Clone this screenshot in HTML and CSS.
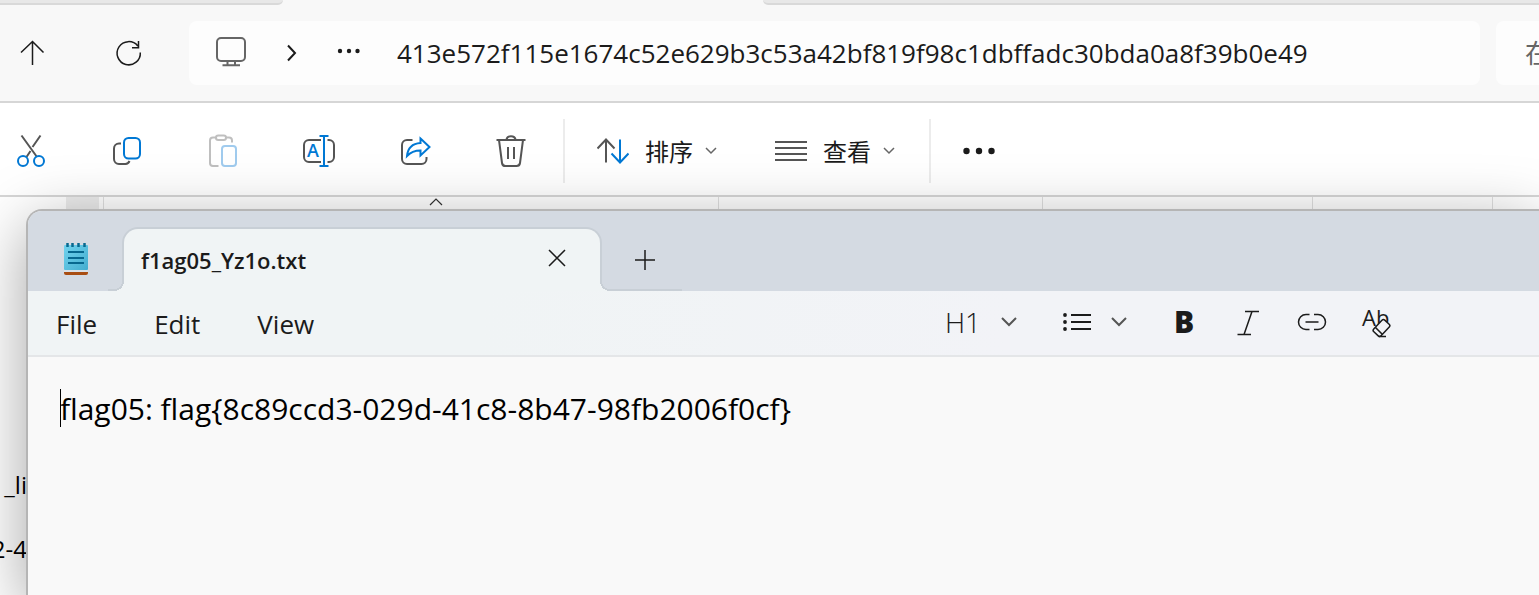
FILE: index.html
```html
<!DOCTYPE html>
<html lang="zh-CN">
<head>
<meta charset="utf-8">
<title>f1ag05_Yz1o.txt</title>
<link rel="stylesheet" href="styles.css">
</head>
<body>
<main class="desktop">
  <section class="explorer" aria-label="Explorer">
    <div class="strip"><div class="strip-left"></div><div class="strip-active"></div><div class="strip-right"></div></div>
    <nav class="nav">
      <button class="nav-button" aria-label="Up"><svg class="icon" viewBox="12 33 40 40"><path class="thin" d="M32.500 41.500V65M21 52.500l11.500-11 11 11"/></svg></button>
      <button class="nav-button" aria-label="Refresh"><svg class="icon" viewBox="108 33 40 40"><path class="thin" d="M140.300 52.500a11.600 11.600 0 1 1-2.500-6.500M138.500 41v6.700H132"/></svg></button>
      <div class="address">
        <svg class="icon" viewBox="211 33 40 40"><g class="monitor"><rect x="217" y="38" width="28" height="23" rx="4"/><path d="M227.500 61v4M235 61v4M222.500 65.300h17.500"/></g></svg>
        <svg class="crumb" viewBox="0 0 12 20"><path class="mid" d="M2 2.500l7 7.500-7 7.500"/></svg>
        <svg class="dots" viewBox="0 0 24 20"><circle cx="3" cy="8" r="2.200"/><circle cx="12" cy="8" r="2.200"/><circle cx="20.500" cy="8" r="2.200"/></svg>
        <input class="path" aria-label="Path" value="413e572f115e1674c52e629b3c53a42bf819f98c1dbffadc30bda0a8f39b0e49">
      </div>
      <input class="search" aria-label="Search" placeholder="在">
    </nav>
    <div class="commands">
      <div class="actions">
        <button class="action" aria-label="Cut"><svg class="icon" viewBox="12 131 40 40"><path class="gray" d="M21.500 135.500l15.500 21.500M40.500 135.500l-8 11.500M30.500 151l-4 6"/><g class="blue"><circle cx="23" cy="161" r="5"/><circle cx="39" cy="161" r="5"/></g></svg></button>
        <button class="action" aria-label="Copy"><svg class="icon" viewBox="108 131 40 40"><path class="gray" d="M121 143.500h-2a5 5 0 0 0-5 5V159a5 5 0 0 0 5 5h6.500a5 5 0 0 0 4-3"/><rect class="blue" x="124" y="138" width="16" height="20.500" rx="4.500"/></svg></button>
        <button class="action" aria-label="Paste" disabled><svg class="icon" viewBox="204 131 40 40"><path class="pale" d="M218.500 166H213a3 3 0 0 1-3-3v-22.500a3 3 0 0 1 3-3h3M226 137.500h3a3 3 0 0 1 3 3v2"/><rect class="pale" x="216" y="135.500" width="10" height="4.500" rx="2.200"/><rect class="paleblue" x="222" y="146" width="14" height="20" rx="3"/></svg></button>
        <button class="action" aria-label="Rename"><svg class="icon" viewBox="300 131 40 40"><path class="gray" d="M321 140h-12a5 5 0 0 0-5 5v12a5 5 0 0 0 5 5h12M327.500 140h1.500a5 5 0 0 1 5 5v12a5 5 0 0 1-5 5h-1.500"/><path class="blue" d="M319.500 136h9M324 136v30M319.500 166h9"/><text class="rename-letter" x="307" y="157">A</text></svg></button>
        <button class="action" aria-label="Share"><svg class="icon" viewBox="396 131 40 40"><path class="gray" d="M412.500 140H407a5 5 0 0 0-5 5v14a5 5 0 0 0 5 5h14.500a5 5 0 0 0 5-5v-2"/><path class="blue" d="M420.500 138.500l9 8.500-9 8.500v-5c-6 0-9.500 1.200-13.500 5.500.8-8 5.500-12.500 13.500-13z"/></svg></button>
        <button class="action" aria-label="Delete"><svg class="icon" viewBox="492 131 40 40"><path class="gray" d="M496.500 140h29M506.500 139.500c.8-4.500 8.200-4.500 9 0M499 140l3 23a3.500 3.500 0 0 0 3.500 3h11a3.500 3.500 0 0 0 3.500-3l3-23M508 147v12M514 147v12"/></svg></button>
      </div>
      <span class="separator"></span>
      <button class="menu-command sort"><svg class="icon32" viewBox="597 135 32 32"><path class="gray" d="M606 162.500V139.500M597.500 148.500l8.500-9 8.500 9"/><path class="blue" d="M620 139.500v23M611.500 153.500l8.500 9 8.500-9"/></svg><span>排序</span><svg class="mini" viewBox="0 0 12 12"><path d="M1 3l5 5 5-5"/></svg></button>
      <button class="menu-command view"><svg class="icon32" viewBox="775 135 32 32"><path class="gray" d="M775 142h32M775 148h32M775 154h32M775 160h32"/></svg><span>查看</span><svg class="mini" viewBox="0 0 12 12"><path d="M1 3l5 5 5-5"/></svg></button>
      <span class="separator second"></span>
      <button class="more" aria-label="More"><svg class="icon32" viewBox="0 0 32 32"><circle cx="3.500" cy="16" r="3.200"/><circle cx="16" cy="16" r="3.200"/><circle cx="28.500" cy="16" r="3.200"/></svg></button>
    </div>
    <div class="listing">
      <div class="columns">
        <span class="column select"></span><span class="column gutter"></span><span class="column name"><svg class="caret-up" viewBox="0 0 14 9"><path d="M1 8l6-6 6 6"/></svg></span><span class="column date"></span><span class="column type"></span><span class="column size"></span><span class="column last"></span>
      </div>
      <div class="files"><span>_li</span><span>2-4</span></div>
    </div>
  </section>

  <section class="notepad" aria-label="Notepad">
    <header class="titlebar">
      <svg class="app" viewBox="0 0 24 34"><defs><linearGradient id="page" x2="1" y2="1"><stop stop-color="#72d3ee"/><stop offset="1" stop-color="#43adcf"/></linearGradient></defs><path fill="#a84d12" d="M0 30h24v1q0 2-2 2H2q-2 0-2-2z"/><path fill="#d9e0e6" d="M0 27h24v3H0z"/><rect y="3" width="24" height="25" rx="1" fill="url(#page)"/><path stroke="#07688f" stroke-width="2.500" d="M3.500 1v4M8.500 1v4M14.500 1v4M20.500 1v4"/><path stroke="#07688f" stroke-width="2" d="M4 10h16M4 16h16M4 21h16"/></svg>
      <div class="tab"><span>f1ag05_Yz1o.txt</span><button class="close" aria-label="Close tab"><svg viewBox="0 0 18 18"><path d="M1 1l16 16M17 1L1 17"/></svg></button></div>
      <button class="new-tab" aria-label="New tab"><svg viewBox="0 0 20 20"><path d="M10 0v20M0 10h20"/></svg></button>
    </header>
    <div class="menubar">
      <div class="menus"><button>File</button><button>Edit</button><button>View</button></div>
      <div class="format">
        <button class="heading">H1<svg class="chevron" viewBox="0 0 16 10"><path d="M1 1l7 7 7-7"/></svg></button>
        <button class="list" aria-label="List"><svg class="bullets" viewBox="0 0 28 18"><path d="M8 2h20M8 9h20M8 16h20"/><circle cx="2" cy="2" r="1.900"/><circle cx="2" cy="9" r="1.900"/><circle cx="2" cy="16" r="1.900"/></svg><svg class="chevron" viewBox="0 0 16 10"><path d="M1 1l7 7 7-7"/></svg></button>
        <button class="bold">B</button>
        <button aria-label="Italic"><svg class="icon32" viewBox="1232 306 32 32"><path class="thin" d="M1245 311.500h14M1237.500 334.500h13.500M1252 311.500l-8 23"/></svg></button>
        <button aria-label="Link"><svg class="icon32" viewBox="1296 306 32 32"><path class="thin" d="M1309.500 314.500h-3.500a7.500 7.500 0 0 0 0 15h3.500M1314 314.500h4a7.500 7.500 0 0 1 0 15h-4M1305.500 322h13"/></svg></button>
        <button aria-label="Clear formatting"><svg class="icon32" viewBox="1360 306 32 32"><text class="clear-letters" x="1362" y="326">Ab</text><rect class="eraser" x="-5" y="-8" width="10" height="16" rx="2" transform="translate(1381.500 328) rotate(43)"/><path class="thin" d="M1375.500 327.500l7 7M1379 336.500h7"/></svg></button>
      </div>
    </div>
    <div class="editor"><span class="text-caret"></span><textarea aria-label="Text editor" spellcheck="false">flag05: flag{8c89ccd3-029d-41c8-8b47-98fb2006f0cf}</textarea></div>
  </section>
</main>
</body>
</html>
```

FILE: styles.css
```css
* { box-sizing: border-box; }
body {
  margin: 0;
  color: #1b1b1b;
  font-family: "Open Sans", "Noto Sans CJK SC", sans-serif;
}
button, input, textarea {
  margin: 0;
  padding: 0;
  border: 0;
  background: none;
  color: inherit;
  font: inherit;
  outline: 0;
}
svg { display: block; flex: none; fill: none; }
.desktop { position: relative; height: 100vh; overflow: hidden; }
.icon { width: 40px; height: 40px; }
.icon32 { width: 32px; height: 32px; }
.thin { stroke: #1b1b1b; stroke-width: 1.5; }
.mid { stroke: #1b1b1b; stroke-width: 2; }
.gray { stroke: #555; stroke-width: 2; }
.blue { stroke: #0078d4; stroke-width: 2; }
.pale { stroke: #bfbfbf; stroke-width: 2; }
.paleblue { stroke: #a0cbee; stroke-width: 2; }

/* Explorer */
.explorer { display: flex; flex-direction: column; height: 100%; background: #fff; }
.strip { display: flex; flex: none; height: 5px; background: #f8f8f8; }
.strip-left { width: 283px; background: #e8e8e8; border-bottom: 2px solid #d9d9d9; border-bottom-right-radius: 5px; }
.strip-active { width: 480px; }
.strip-right { flex: 1; background: #e8e8e8; border-bottom: 2px solid #d9d9d9; border-bottom-left-radius: 5px; }
.nav {
  display: flex;
  flex: none;
  align-items: center;
  height: 98px;
  background: #f8f8f8;
  border-bottom: 2px solid #d6d6d6;
}
.nav-button { display: flex; justify-content: center; width: 64px; margin-right: 32px; }
.nav-button + .nav-button { margin-right: 29px; }
.address {
  display: flex;
  flex: 1;
  align-items: center;
  height: 64px;
  padding-left: 22px;
  background: #fdfdfd;
  border-radius: 8px;
}
.monitor { stroke: #666; stroke-width: 2; }
.crumb { width: 12px; height: 20px; margin-left: 35px; }
.dots { width: 24px; height: 20px; margin: 0 36px 0 39px; fill: #1b1b1b; }
.path { flex: 1; min-width: 0; height: 40px; font-size: 26px; }
.search {
  width: 43px;
  height: 64px;
  margin-left: 16px;
  padding-left: 29px;
  background: #fdfdfd;
  border-radius: 8px 0 0 8px;
  font-size: 26px;
}
.search::placeholder { color: #666; opacity: 1; }
.commands {
  display: flex;
  flex: none;
  align-items: center;
  height: 94px;
  padding-top: 4px;
  border-bottom: 2px solid #d6d6d6;
}
.actions { display: flex; gap: 32px; }
.action { display: flex; justify-content: center; width: 64px; }
.rename-letter { fill: #0078d4; font-size: 18px; font-weight: 600; }
.separator { width: 2px; height: 64px; margin-left: 19px; background: #ececec; }
.second { margin-left: 34px; }
.menu-command { display: flex; align-items: center; margin-left: 32px; font-size: 24px; line-height: 32px; }
.menu-command span { margin: 0 12px 0 16px; padding-top: 2px; }
.view { margin-left: 58px; }
.mini { width: 12px; height: 12px; stroke: #666; stroke-width: 1.5; }
.more { margin-left: 32px; }
.more svg { fill: #1b1b1b; }
.listing { flex: 1; }
.columns { display: flex; height: 24px; }
.column { border-right: 1px solid #e0e0e0; }
.select { width: 99px; border-right: 0; background: linear-gradient(#ececec, #ececec) right / 33px 100% no-repeat; }
.gutter { width: 5px; }
.name { display: flex; justify-content: center; width: 615px; padding-left: 50px; }
.date { width: 324px; }
.type { width: 270px; }
.size { width: 180px; }
.last { border: 0; }
.caret-up { width: 14px; height: 9px; stroke: #333; stroke-width: 1.2; }
.files {
  display: flex;
  flex-direction: column;
  align-items: flex-end;
  width: 27px;
  padding-top: 232px;
  color: #000;
  font-size: 24px;
  line-height: 64px;
  white-space: nowrap;
}

/* Notepad */
.notepad {
  position: absolute;
  inset: 209px 0 0 26px;
  display: flex;
  flex-direction: column;
  background: #f9f9f9;
  border: solid #b5b5b5;
  border-width: 2px 0 0 2px;
  border-top-left-radius: 16px;
  box-shadow: 0 16px 64px rgba(0, 0, 0, 0.36);
}
.titlebar {
  display: flex;
  flex: none;
  height: 80px;
  padding-left: 36px;
  background: #d4dae2;
  border-top-left-radius: 14px;
}
.app { width: 24px; height: 34px; margin-top: 31px; }
.tab {
  position: relative;
  display: flex;
  justify-content: space-between;
  width: 480px;
  margin: 16px 0 0 34px;
  padding: 0 34px 0 17px;
  background: #f0f4f5;
  border: solid #c8cfd6;
  border-width: 2px 2px 0;
  border-radius: 16px 16px 0 0;
  font-size: 22px;
  font-weight: 600;
  line-height: 62px;
}
.tab::before, .tab::after { content: ""; position: absolute; bottom: 0; height: 10px; }
.tab::before {
  left: -16px;
  width: 16px;
  background:
    radial-gradient(circle at 0 0, #d4dae2 8px, #c8cfd6 8px 10px, #f0f4f5 10px) right / 10px 10px no-repeat,
    linear-gradient(#c8cfd6, #c8cfd6) bottom / 100% 2px no-repeat;
}
.tab::after {
  right: -82px;
  width: 82px;
  background:
    radial-gradient(circle at 100% 0, #d4dae2 8px, #c8cfd6 8px 10px, #f0f4f5 10px) left / 10px 10px no-repeat,
    linear-gradient(#c8cfd6, #c8cfd6) right bottom / 72px 2px no-repeat;
}
.close { align-self: flex-start; margin-top: 20px; }
.close svg { width: 18px; height: 18px; stroke: #1b1b1b; stroke-width: 1.5; }
.new-tab { align-self: flex-start; margin: 39px 0 0 33px; }
.new-tab svg { width: 20px; height: 20px; stroke: #1b1b1b; stroke-width: 1.5; }
.menubar {
  display: flex;
  flex: none;
  align-items: center;
  justify-content: space-between;
  height: 66px;
  padding: 0 147px 2px 28px;
  background: linear-gradient(100deg, #f0f4f5 30%, #f2f3f7 65%);
  border-bottom: 2px solid #e4e6e8;
}
.menus { display: flex; gap: 57px; padding-top: 4px; font-size: 26px; line-height: 36px; }
.format { display: flex; align-items: center; }
.format button { display: flex; align-items: center; margin-left: 32px; }
.format .heading { gap: 20px; font-size: 28px; font-weight: 300; line-height: 32px; }
.format .list { gap: 20px; margin-left: 46px; }
.format .bold { justify-content: center; width: 32px; margin-left: 41px; font-size: 30px; font-weight: 800; line-height: 32px; }
.chevron { width: 16px; height: 10px; stroke: #555; stroke-width: 2; }
.bullets { width: 28px; height: 18px; stroke: #1b1b1b; stroke-width: 2; }
.bullets circle { fill: #1b1b1b; stroke: none; }
.clear-letters { fill: #1b1b1b; font-size: 22px; }
.eraser { fill: #f2f3f7; stroke: #1b1b1b; stroke-width: 1.5; }
.editor { position: relative; display: flex; flex: 1; padding: 32px 32px 0; color: #000; }
.editor textarea { flex: 1; resize: none; overflow: hidden; font-size: 30px; line-height: 40px; }
.text-caret { position: absolute; top: 32px; left: 32px; width: 1px; height: 38px; background: #000; }
```
